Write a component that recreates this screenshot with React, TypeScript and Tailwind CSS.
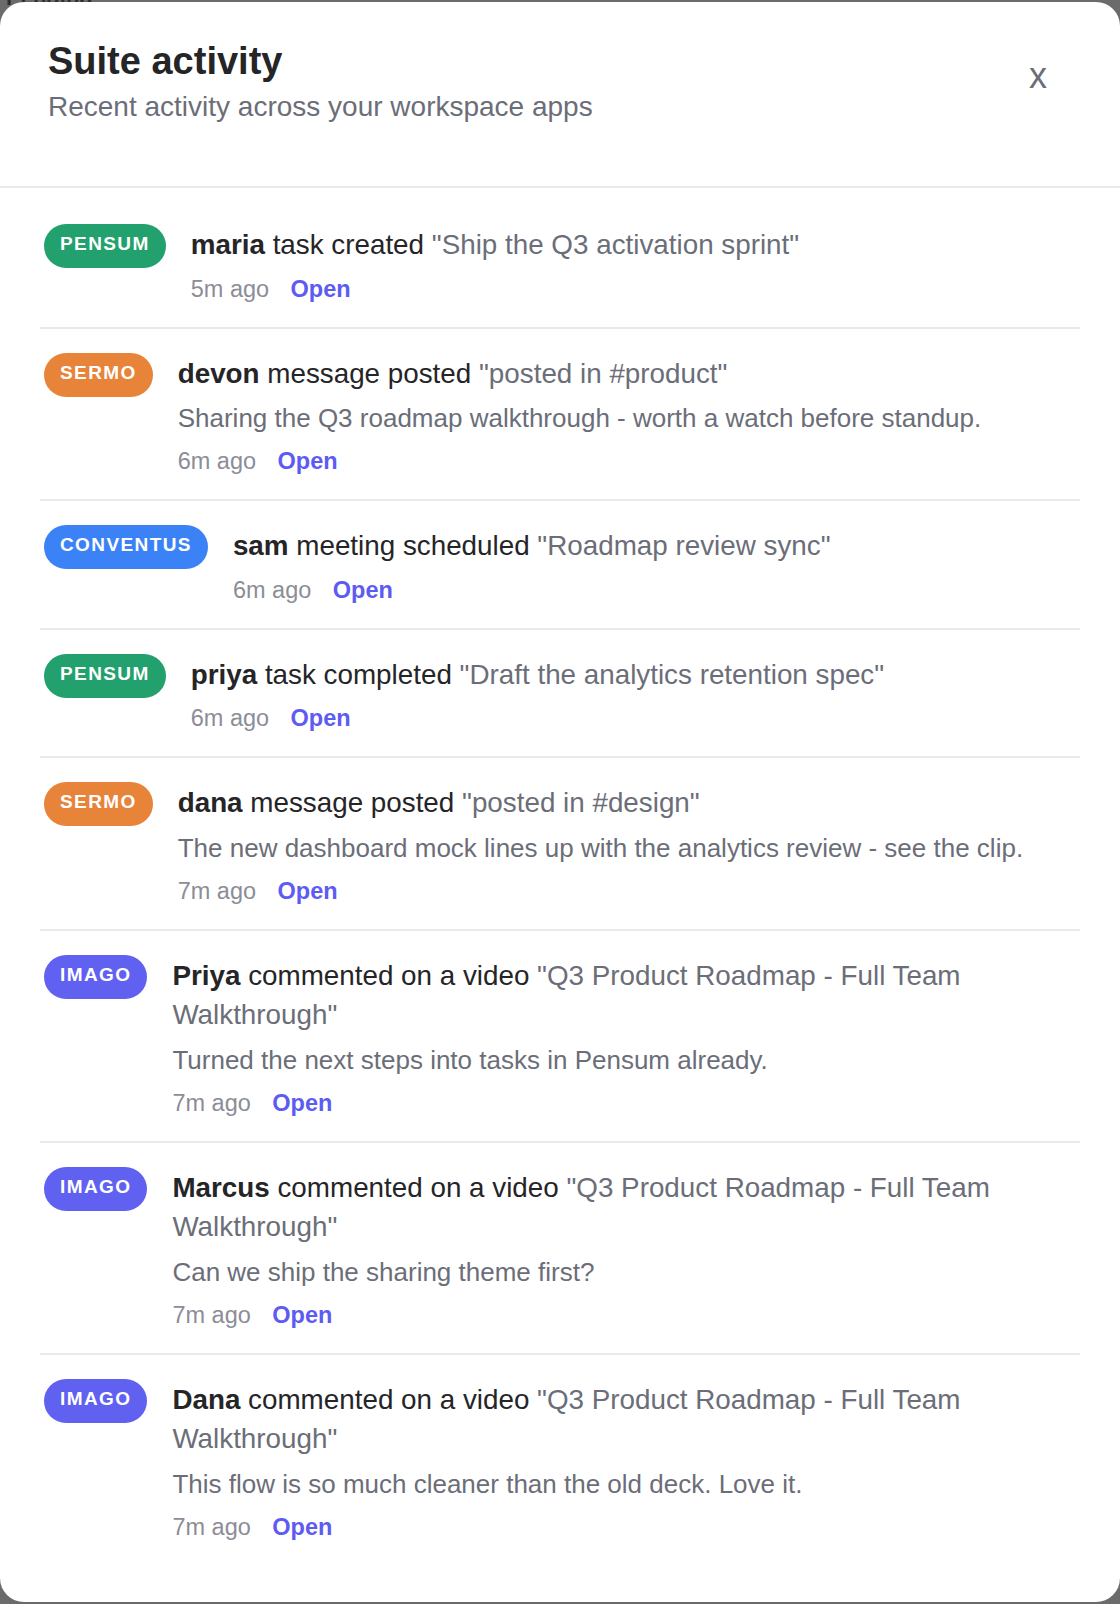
import React from "react";

type Item = {
  app: "PENSUM" | "SERMO" | "CONVENTUS" | "IMAGO";
  name: string;
  action: string;
  quote: string;
  body?: string;
  time: string;
};

const badgeClass: Record<Item["app"], string> = {
  PENSUM: "bg-[#22a06d]",
  SERMO: "bg-[#e8833a]",
  CONVENTUS: "bg-[#3b82f6]",
  IMAGO: "bg-[#6061f1]",
};

const items: Item[] = [
  { app: "PENSUM", name: "maria", action: "task created", quote: "\"Ship the Q3 activation sprint\"", time: "5m ago" },
  {
    app: "SERMO",
    name: "devon",
    action: "message posted",
    quote: "\"posted in #product\"",
    body: "Sharing the Q3 roadmap walkthrough - worth a watch before standup.",
    time: "6m ago",
  },
  { app: "CONVENTUS", name: "sam", action: "meeting scheduled", quote: "\"Roadmap review sync\"", time: "6m ago" },
  { app: "PENSUM", name: "priya", action: "task completed", quote: "\"Draft the analytics retention spec\"", time: "6m ago" },
  {
    app: "SERMO",
    name: "dana",
    action: "message posted",
    quote: "\"posted in #design\"",
    body: "The new dashboard mock lines up with the analytics review - see the clip.",
    time: "7m ago",
  },
  {
    app: "IMAGO",
    name: "Priya",
    action: "commented on a video",
    quote: "\"Q3 Product Roadmap - Full Team Walkthrough\"",
    body: "Turned the next steps into tasks in Pensum already.",
    time: "7m ago",
  },
  {
    app: "IMAGO",
    name: "Marcus",
    action: "commented on a video",
    quote: "\"Q3 Product Roadmap - Full Team Walkthrough\"",
    body: "Can we ship the sharing theme first?",
    time: "7m ago",
  },
  {
    app: "IMAGO",
    name: "Dana",
    action: "commented on a video",
    quote: "\"Q3 Product Roadmap - Full Team Walkthrough\"",
    body: "This flow is so much cleaner than the old deck. Love it.",
    time: "7m ago",
  },
];

function Row({ item, last }: { item: Item; last: boolean }) {
  return (
    <div
      className={
        "flex items-start gap-[25px] px-[4px] pt-[24px] pb-[21px] " +
        (last ? "" : "border-b-2 border-[#e9e9ee]")
      }
    >
      <span
        className={
          "flex h-[44px] shrink-0 items-center rounded-full pl-[16px] pr-[16px] pb-[3px] text-[19px] font-bold tracking-[1.4px] text-white " +
          badgeClass[item.app]
        }
      >
        {item.app}
      </span>
      <div className="min-w-0 flex-1 pt-[1px]">
        <p className="text-[27.8px] leading-[39.5px] text-[#252528]">
          <span className="font-bold">{item.name}</span> {item.action}{" "}
          <span className="text-[#6b6e78]">{item.quote}</span>
        </p>
        {item.body && (
          <p className="mt-[7px] text-[26px] leading-[37px] text-[#6b6e78]">{item.body}</p>
        )}
        <div
          className={
            "flex items-center gap-[21.5px] text-[23.5px] leading-[34px] " +
            (item.body ? "mt-[7px]" : "mt-[7px]")
          }
        >
          <span className="text-[#8c8d97]">{item.time}</span>
          <span className="font-bold text-[#5d5cf2]">Open</span>
        </div>
      </div>
    </div>
  );
}

export default function App() {
  return (
    <div
      className="relative h-[1604px] w-full overflow-hidden bg-[#6b6b6b]"
      style={{ fontFamily: '"Liberation Sans", Arial, sans-serif' }}
    >
      <span className="absolute left-[6px] top-[-19px] text-[22px] font-bold text-[#2f2f2f]">Pending</span>
      <div className="relative mt-[2px] flex h-[1600px] w-full flex-col overflow-hidden rounded-[24px] bg-white">
        <div className="flex items-start justify-between border-b-2 border-[#e9e9ee] pl-[48px] pr-[73px] pt-[36px] pb-[59px]">
          <div>
            <h1 className="text-[38px] font-bold leading-[47px] text-[#252528]">Suite activity</h1>
            <p className="mt-[2px] text-[28px] leading-[40px] text-[#6b6e78]">
              Recent activity across your workspace apps
            </p>
          </div>
          <button className="mt-[20px] text-[36px] leading-[36px] text-[#6b6e78]">x</button>
        </div>
        <div className="px-[40px] pt-[12px]">
          {items.map((it, i) => (
            <Row key={i} item={it} last={i === items.length - 1} />
          ))}
        </div>
      </div>
    </div>
  );
}
